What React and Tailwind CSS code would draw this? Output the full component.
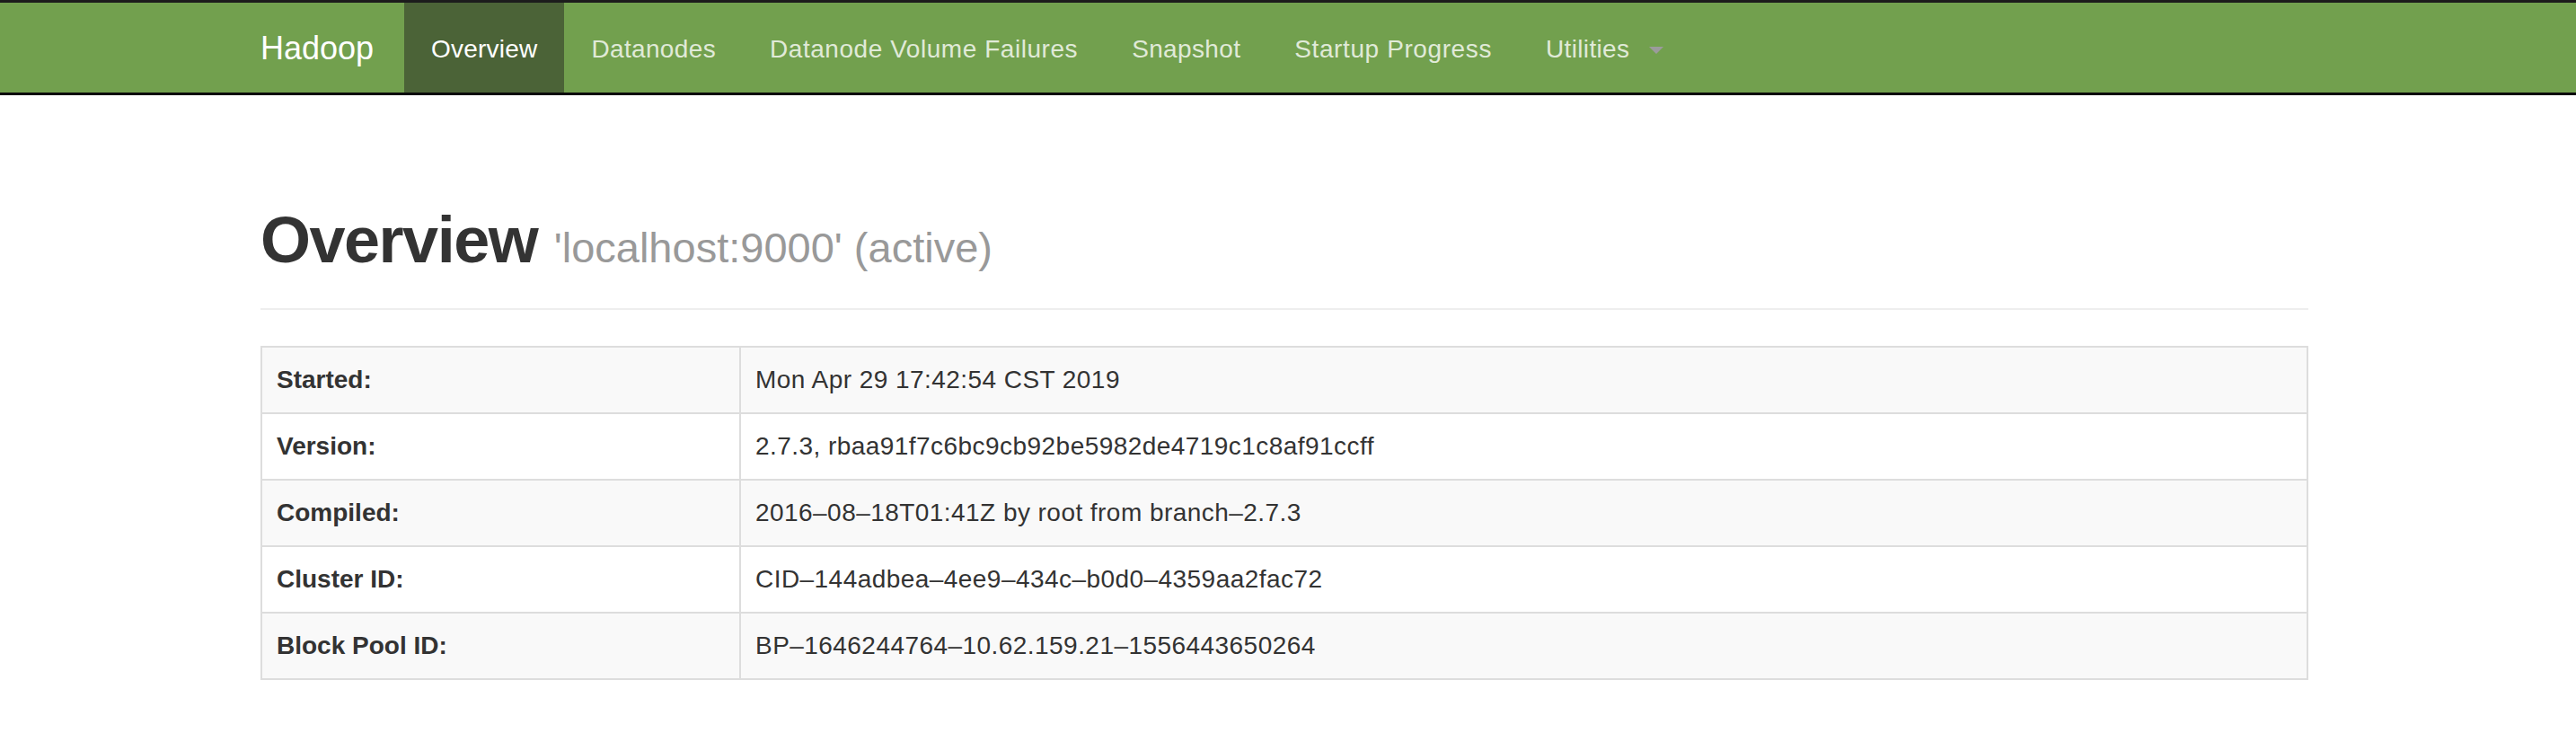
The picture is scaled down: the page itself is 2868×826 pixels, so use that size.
import React from 'react';

// label + letter spacing tweak so the widths line up with the original Helvetica Neue
const NAV_LINKS = [
  { label: 'Datanodes', cls: 'tracking-[0.35px]' },
  { label: 'Datanode Volume Failures', cls: 'tracking-[0.55px]' },
  { label: 'Snapshot', cls: 'tracking-[0.35px]' },
  { label: 'Startup Progress', cls: 'tracking-[0.6px]' },
];

const INFO_ROWS = [
  ['Started:', 'Mon Apr 29 17:42:54 CST 2019'],
  ['Version:', '2.7.3, rbaa91f7c6bc9cb92be5982de4719c1c8af91ccff'],
  ['Compiled:', '2016–08–18T01:41Z by root from branch–2.7.3'],
  ['Cluster ID:', 'CID–144adbea–4ee9–434c–b0d0–4359aa2fac72'],
  ['Block Pool ID:', 'BP–1646244764–10.62.159.21–1556443650264'],
];

const Navbar = () => (
  <header className="w-full bg-[#72a04e] border-t-[3px] border-b-[3px] border-t-[#1c1c1c] border-b-[#0a0a0a]">
    <div className="ml-[260px] flex items-stretch h-[100px]">
      {/* brand */}
      <a className="pl-[30px] pr-[34px] pt-[31px] pb-[29px] text-[36px] leading-[40px] text-white">Hadoop</a>

      {/* nav */}
      <ul className="flex">
        <li>
          <a className="block px-[30px] pt-[32px] pb-[28px] text-[28px] leading-[40px] tracking-[0.2px] text-white bg-[#4b6337]">Overview</a>
        </li>
        {NAV_LINKS.map(({ label, cls }) => (
          <li key={label}>
            <a className={`block px-[30px] pt-[32px] pb-[28px] text-[28px] leading-[40px] text-[#e0ead8] ${cls}`}>{label}</a>
          </li>
        ))}
        <li>
          <a className="flex items-center px-[30px] pt-[32px] pb-[28px] text-[28px] leading-[40px] tracking-[0.35px] text-[#e0ead8]">
            Utilities
            <span className="ml-[22px] mt-[2px] w-0 h-0 border-t-[8px] border-t-[#9b9b9b] border-l-[8px] border-l-transparent border-r-[8px] border-r-transparent" />
          </a>
        </li>
      </ul>
    </div>
  </header>
);

const App = () => {
  return (
    <div className="min-h-[826px] bg-white text-[#333] font-['Liberation_Sans',Arial,sans-serif]">
      <Navbar />

      <div className="ml-[290px] w-[2280px]">
        {/* page header */}
        <div className="mt-[122px] pb-[16px] border-b-2 border-[#eeeeee]">
          <h1 className="mb-[20px] text-[72px] leading-[79px] font-bold text-[#333] tracking-[-1.5px]">
            Overview{' '}
            <small className="text-[47px] leading-none font-normal text-[#999] tracking-normal">'localhost:9000' (active)</small>
          </h1>
        </div>

        {/* info table */}
        <div className="mt-[40px] border-2 border-[#dddddd]">
          {INFO_ROWS.map(([label, value], i) => (
            <div
              key={label}
              className={`flex ${i > 0 ? 'border-t-2 border-[#dddddd]' : ''} ${i % 2 === 0 ? 'bg-[#f9f9f9]' : 'bg-white'}`}
            >
              <div className="w-[533px] shrink-0 border-r-2 border-[#dddddd] p-[16px] text-[28px] leading-[40px] font-bold">
                {label}
              </div>
              <div className="flex-1 p-[16px] text-[28px] leading-[40px] tracking-[0.45px]">{value}</div>
            </div>
          ))}
        </div>
      </div>
    </div>
  );
};

export default App;
